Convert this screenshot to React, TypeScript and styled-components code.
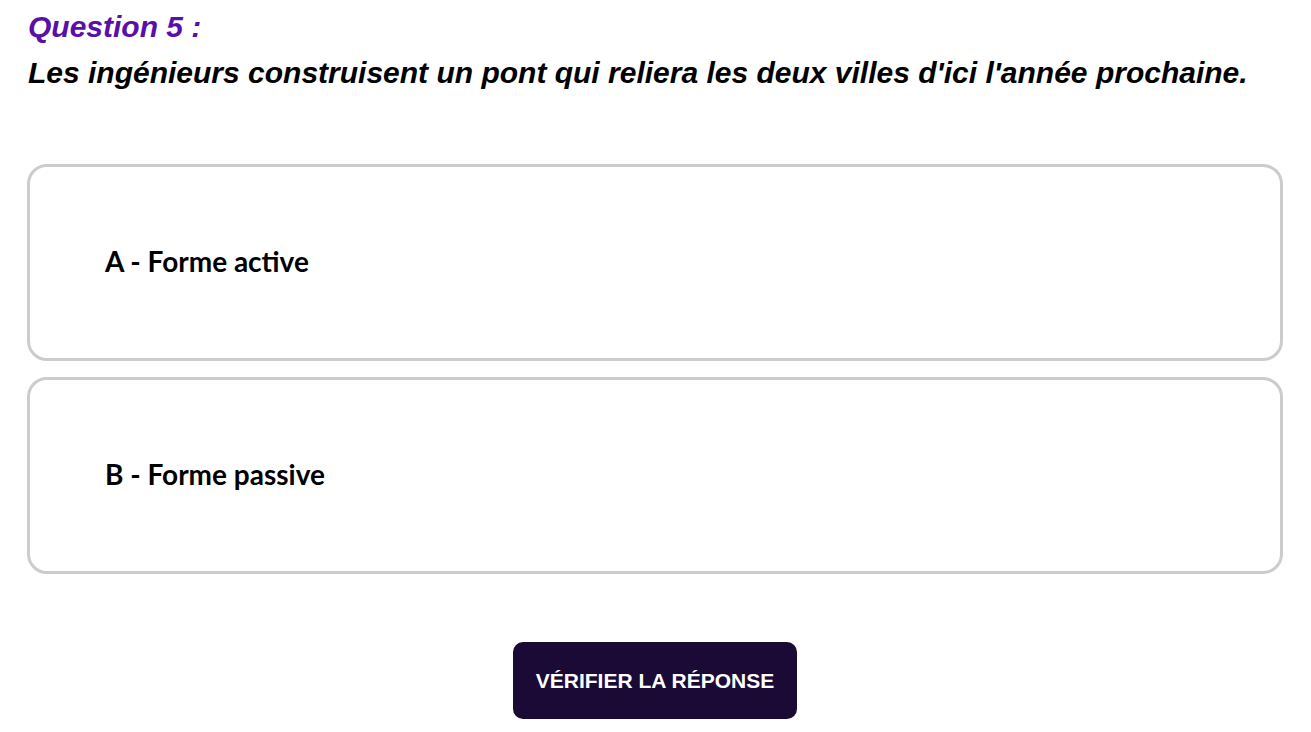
import styled, { createGlobalStyle } from "styled-components";

const GlobalStyle = createGlobalStyle`
  body {
    margin: 0;
    background: #ffffff;
    font-family: "Liberation Sans", Arial, sans-serif;
  }
`;

const options = ["A - Forme active", "B - Forme passive"];

const App = () => {
  return (
    <>
      <GlobalStyle />
      <QuizStyle>
        <Header>
          <QuestionNumber>Question 5 :</QuestionNumber>
          <QuestionText>
            Les ingénieurs construisent un pont qui reliera les deux villes
            d'ici l'année prochaine.
          </QuestionText>
        </Header>
        <Options>
          {options.map((option) => (
            <OptionCard key={option}>{option}</OptionCard>
          ))}
        </Options>
        <Actions>
          <CheckButton>Vérifier la réponse</CheckButton>
        </Actions>
      </QuizStyle>
    </>
  );
};

const QuizStyle = styled.div`
  padding: 9px 28px 0 27px;
  display: flex;
  flex-direction: column;
`;

const Header = styled.div`
  display: flex;
  flex-direction: column;
  gap: 10px;
  padding-left: 1px;
`;

const QuestionNumber = styled.h2`
  margin: 0;
  color: #5a0fa8;
  font-size: 30px;
  font-style: italic;
  font-weight: 700;
  line-height: 36px;
`;

const QuestionText = styled.p`
  margin: 0;
  color: #000000;
  font-size: 30px;
  font-style: italic;
  font-weight: 700;
  line-height: 36px;
  white-space: nowrap;
`;

const Options = styled.div`
  display: flex;
  flex-direction: column;
  gap: 16px;
  margin-top: 73px;
`;

const OptionCard = styled.div`
  height: 197px;
  box-sizing: border-box;
  border: 3px solid #cccccc;
  border-radius: 20px;
  padding: 0 0 4px 75px;
  display: flex;
  align-items: center;
  font-family: Lato, "Liberation Sans", sans-serif;
  font-weight: 700;
  font-size: 28px;
  color: #000000;
  cursor: pointer;
`;

const Actions = styled.div`
  display: flex;
  justify-content: center;
  margin-top: 68px;
`;

const CheckButton = styled.button`
  width: 284px;
  height: 77px;
  border: 0;
  border-radius: 10px;
  background: #1c0a36;
  color: #ffffff;
  font-family: "Liberation Sans", Arial, sans-serif;
  font-size: 21px;
  font-weight: 700;
  text-transform: uppercase;
  cursor: pointer;
`;

export default App;
